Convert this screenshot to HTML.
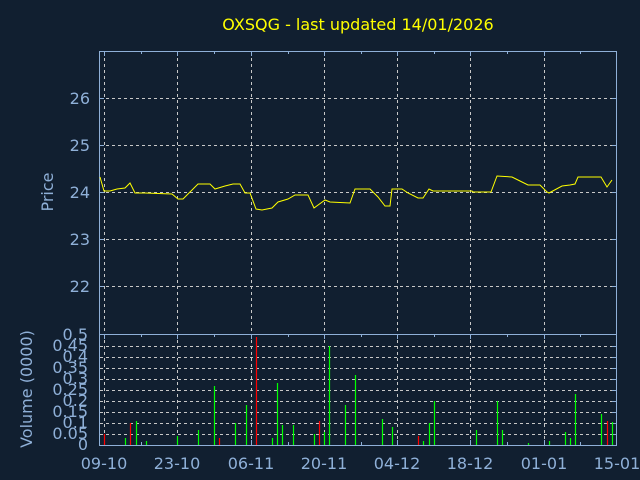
<!DOCTYPE html>
<html><head><meta charset="utf-8"><style>
html,body{margin:0;padding:0;background:#111f30;width:640px;height:480px;overflow:hidden}
svg{display:block}
text{font-family:"DejaVu Sans","Liberation Sans",sans-serif}
</style></head><body>
<svg width="640" height="480" viewBox="0 0 640 480">
<rect width="640" height="480" fill="#111f30"/>
<text x="358" y="30" fill="#ffff00" font-size="16" text-anchor="middle">OXSQG - last updated 14/01/2026</text>
<g stroke="#c8c8c8" stroke-width="1" stroke-dasharray="3,3" fill="none">
<path d="M104.5 52V445M177.5 52V445M251.5 52V445M324.5 52V445M397.5 52V445M470.5 52V445M544.5 52V445"/>
<path d="M100 98.5H617M100 145.5H617M100 192.5H617M100 239.5H617M100 286.5H617"/>
<path d="M100 346.5H617M100 357.5H617M100 368.5H617M100 379.5H617M100 390.5H617M100 401.5H617M100 412.5H617M100 423.5H617M100 434.5H617"/>
</g>
<g stroke="#8fb0d8" stroke-width="1" fill="none">
<rect x="99.5" y="51.5" width="517" height="394"/>
<path d="M99.5 334.5H617"/>
<path d="M104.5 51V56M177.5 51V56M251.5 51V56M324.5 51V56M397.5 51V56M470.5 51V56M544.5 51V56M141.5 51V54M214.5 51V54M288.5 51V54M361.5 51V54M434.5 51V54M507.5 51V54M580.5 51V54"/>
<path d="M104.5 334V339M177.5 334V339M251.5 334V339M324.5 334V339M397.5 334V339M470.5 334V339M544.5 334V339M141.5 334V337M214.5 334V337M288.5 334V337M361.5 334V337M434.5 334V337M507.5 334V337M580.5 334V337"/>
<path d="M104.5 445V440M177.5 445V440M251.5 445V440M324.5 445V440M397.5 445V440M470.5 445V440M544.5 445V440M141.5 445V442M214.5 445V442M288.5 445V442M361.5 445V442M434.5 445V442M507.5 445V442M580.5 445V442"/>
<path d="M99 98.5H104M99 145.5H104M99 192.5H104M99 239.5H104M99 286.5H104M612 98.5H617M612 145.5H617M612 192.5H617M612 239.5H617M612 286.5H617"/>
<path d="M612 346.5H617M612 357.5H617M612 368.5H617M612 379.5H617M612 390.5H617M612 401.5H617M612 412.5H617M612 423.5H617M612 434.5H617"/>
</g>
<polyline fill="none" stroke="#ffff00" stroke-width="1" points="100,177 104,191 110,191 117,189 125,188 130,183 135,193 145,193 172,194 178,199 183,199 198,184 210,184 215,189 225,186 233,184 240,184 245,193 250,193 256,209 262,210 272,208 278,202 288,199 295,195 308,195 314,208 325,200 330,202 350,203 355,189 370,189 378,197 385,206 390,206 392,189 402,189 408,193 418,198 423,198 429,189 433,191 472,191 473,192 491,192 497,176 512,177 520,181 528,185 540,185 547,192 549,193 562,186 570,185 575,184 578,177 601,177 607,187 612,180"/>
<g stroke-width="1.2">
<path stroke="#ff0000" d="M104.5 445V434M130.5 445V423M219.5 445V438M256.5 445V337M319.5 445V421M418.5 445V436M607.5 445V421"/>
<path stroke="#00ff00" d="M125.5 445V438M136.5 445V421M146.5 445V441M177.5 445V436M198.5 445V430M214.5 445V386M235.5 445V423M246.5 445V405M272.5 445V438M277.5 445V383M282.5 445V425M293.5 445V425M314.5 445V434M324.5 445V432M329.5 445V346M345.5 445V405M355.5 445V375M382.5 445V419M392.5 445V427M423.5 445V441M429.5 445V423M434.5 445V401M476.5 445V430M497.5 445V401M502.5 445V430M528.5 445V443M549.5 445V441M565.5 445V432M570.5 445V438M575.5 445V394M601.5 445V414M612.5 445V422"/>
</g>
<g fill="#8fb0d8" font-size="16" text-anchor="end">
<text x="90" y="104">26</text><text x="90" y="151">25</text><text x="90" y="198">24</text><text x="90" y="245">23</text><text x="90" y="292">22</text>
</g>
<g fill="#8fb0d8" font-size="16" text-anchor="end">
<text x="88" y="340">0.5</text><text x="88" y="351">0.45</text><text x="88" y="362">0.4</text><text x="88" y="373">0.35</text><text x="88" y="384">0.3</text><text x="88" y="395">0.25</text><text x="88" y="406">0.2</text><text x="88" y="417">0.15</text><text x="88" y="428">0.1</text><text x="88" y="439">0.05</text><text x="88" y="450">0</text>
</g>
<text transform="translate(53,192) rotate(-90)" fill="#8fb0d8" font-size="16" text-anchor="middle">Price</text>
<text transform="translate(32,389) rotate(-90)" fill="#8fb0d8" font-size="16" text-anchor="middle">Volume (0000)</text>
<g fill="#8fb0d8" font-size="16" text-anchor="middle">
<text x="104" y="469">09-10</text><text x="177" y="469">23-10</text><text x="251" y="469">06-11</text><text x="324" y="469">20-11</text><text x="397" y="469">04-12</text><text x="470" y="469">18-12</text><text x="544" y="469">01-01</text><text x="617" y="469">15-01</text>
</g>
</svg>
</body></html>
